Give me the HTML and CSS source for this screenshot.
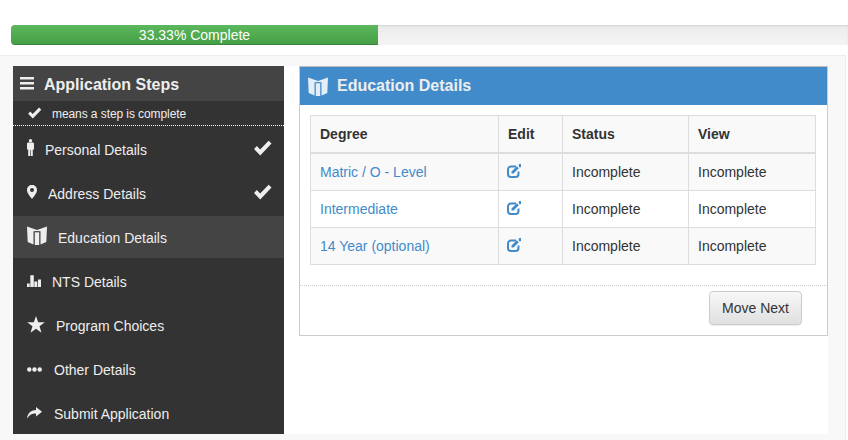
FILE: index.html
```html
<!DOCTYPE html>
<html lang="en">
<head>
<meta charset="utf-8">
<title>Education Details</title>
<link rel="stylesheet" href="styles.css">
</head>
<body>
<svg class="defs" width="0" height="0" aria-hidden="true">
  <defs>
    <symbol id="i-check" viewBox="0 0 20 17"><path d="M1 9.500 4 6.500 7.500 10 16.500 .8 19.600 3.800 7.600 16.400Z"/></symbol>
    <symbol id="i-book" viewBox="0 0 20 19"><path d="M0 .5 10 4 20 .5 19.300 16 13.500 18.600V5.200L10 5 6.500 5.200V18.600L.7 16Z"/><path d="M7.800 6.300H12.200V19H7.800Z"/></symbol>
    <symbol id="i-edit" viewBox="0 0 14 14"><path class="edit-box" d="M9 2.500H4A3 3 0 0 0 1 5.500V10A3 3 0 0 0 4 13H8.500A3 3 0 0 0 11.500 10V7.500"/><path d="M4.500 7.500 9.800 2.200 11.800 4.200 6.500 9.500H4.500ZM12 1.500A1.200 1.200 0 1 0 14 1.500 1.200 1.200 0 1 0 12 1.500Z"/></symbol>
  </defs>
</svg>

<div class="progress">
  <div class="progress-bar" style="width:367px">33.33% Complete</div>
</div>

<main class="shell">
  <div class="shell-row">
    <nav class="steps">
      <h2 class="steps-title">
        <svg class="bars" viewBox="0 0 14 13" width="14" height="13" aria-hidden="true"><path d="M0 0H14V2.600H0ZM0 5H14V7.600H0ZM0 10H14V12.600H0Z"/></svg>
        <span class="title-text">Application Steps</span>
      </h2>
      <p class="steps-note">
        <svg class="note-check" width="15" height="12" aria-hidden="true"><use href="#i-check"/></svg>
        <span class="note-text">means a step is complete</span>
      </p>
      <ul class="step-list">
        <li class="step">
          <svg class="ic ic-person" viewBox="0 0 7 17" width="7" height="17" aria-hidden="true"><circle cx="3.500" cy="1.700" r="1.700"/><path d="M1.300 3.600H5.700C6.500 3.600 7 4.200 7 5V10.500H5.800V17H3.800V11H3.200V17H1.200V10.500H0V5C0 4.200.5 3.600 1.300 3.600Z"/></svg>
          <span>Personal Details</span>
          <svg class="done" width="19" height="16" aria-hidden="true"><use href="#i-check"/></svg>
        </li>
        <li class="step">
          <svg class="ic ic-pin" viewBox="0 0 10 14" width="10" height="14" aria-hidden="true"><path fill-rule="evenodd" d="M5 0C7.800 0 10 2.100 10 4.900 10 8 6.800 11.500 5 14 3.200 11.500 0 8 0 4.900 0 2.100 2.200 0 5 0ZM5 2.900A2 2 0 1 0 5 6.900 2 2 0 1 0 5 2.900Z"/></svg>
          <span>Address Details</span>
          <svg class="done" width="19" height="16" aria-hidden="true"><use href="#i-check"/></svg>
        </li>
        <li class="step step-active">
          <svg class="ic ic-book" width="20" height="19" aria-hidden="true"><use href="#i-book"/></svg>
          <span>Education Details</span>
        </li>
        <li class="step">
          <svg class="ic ic-chart" viewBox="0 0 14 12" width="14" height="12" aria-hidden="true"><path d="M0 8.500H2.700V12H0ZM3.300 .2H6.800V12H3.300ZM7.300 6.500H10.300V12H7.300ZM11 4.500H14V12H11Z"/></svg>
          <span>NTS Details</span>
        </li>
        <li class="step">
          <svg class="ic ic-star" viewBox="0 0 18 17" width="18" height="17" aria-hidden="true"><path d="M9 0 11.200 6.300H17.800L12.500 10.300 14.500 16.800 9 12.800 3.500 16.800 5.500 10.300 .2 6.300H6.800Z"/></svg>
          <span>Program Choices</span>
        </li>
        <li class="step">
          <svg class="ic ic-dots" viewBox="0 0 15 5" width="15" height="5" aria-hidden="true"><circle cx="2.300" cy="2.500" r="2.200"/><circle cx="7.500" cy="2.500" r="2.200"/><circle cx="12.700" cy="2.500" r="2.200"/></svg>
          <span>Other Details</span>
        </li>
        <li class="step">
          <svg class="ic ic-share" viewBox="0 0 15 12" width="15" height="12" aria-hidden="true"><path d="M9 0 15 4.800 9 9.600V6.500C5.500 6.300 2.500 7.500 0 11.500 .5 6.500 3.500 3 9 2.900Z"/></svg>
          <span>Submit Application</span>
        </li>
      </ul>
    </nav>

    <section class="content">
      <article class="panel">
        <header class="panel-head">
          <svg class="head-book" width="20" height="19" aria-hidden="true"><use href="#i-book"/></svg>
          <h3 class="panel-title">Education Details</h3>
        </header>
        <div class="panel-body">
          <table class="grid">
            <colgroup>
              <col class="c-degree"><col class="c-edit"><col class="c-status"><col class="c-view">
            </colgroup>
            <thead>
              <tr><th>Degree</th><th>Edit</th><th>Status</th><th>View</th></tr>
            </thead>
            <tbody>
              <tr class="odd">
                <td><a class="link" href="#">Matric / O - Level</a></td>
                <td><svg class="edit" width="14" height="14" aria-hidden="true"><use href="#i-edit"/></svg></td>
                <td>Incomplete</td><td>Incomplete</td>
              </tr>
              <tr>
                <td><a class="link" href="#">Intermediate</a></td>
                <td><svg class="edit" width="14" height="14" aria-hidden="true"><use href="#i-edit"/></svg></td>
                <td>Incomplete</td><td>Incomplete</td>
              </tr>
              <tr class="odd">
                <td><a class="link" href="#">14 Year (optional)</a></td>
                <td><svg class="edit" width="14" height="14" aria-hidden="true"><use href="#i-edit"/></svg></td>
                <td>Incomplete</td><td>Incomplete</td>
              </tr>
            </tbody>
          </table>
        </div>
        <footer class="panel-foot">
          <button class="btn" type="button">Move Next</button>
        </footer>
      </article>
    </section>
  </div>
</main>
</body>
</html>
```
FILE: styles.css
```css
* { box-sizing: border-box; }
html, body { margin: 0; padding: 0; height: 100%; overflow: hidden; }
body {
  background: #fff;
  color: #333;
  font-family: "Liberation Sans", Arial, sans-serif;
  font-size: 14px;
  line-height: 20px;
  padding-top: 25px;
}
.defs { position: absolute; }

.progress {
  margin-left: 11px;
  height: 20px;
  background: linear-gradient(#ebebeb, #f5f5f5);
  box-shadow: inset 0 1px 2px rgba(0,0,0,.1);
  border-radius: 4px 0 0 4px;
  overflow: hidden;
}
.progress-bar {
  height: 20px;
  color: #fff;
  text-align: center;
  background: linear-gradient(#5cb85c, #449d44);
  box-shadow: inset 0 -1px 0 rgba(0,0,0,.15);
}

.shell {
  margin-top: 10px;
  width: 846px;
  background: #f8f8f8;
  border-top: 1px solid #eee;
  border-right: 1px solid #eee;
  padding: 10px 17px 6px 13px;
}
.shell-row { display: flex; height: 368px; background: #fff; }

.steps {
  width: 271px;
  flex: none;
  background: #333;
  color: #eee;
  overflow: hidden;
}
.steps-title {
  display: flex;
  align-items: center;
  gap: 10px;
  margin: 0;
  height: 35px;
  padding-left: 7px;
  background: #444;
  font-size: 16px;
  font-weight: bold;
}
.title-text { padding-top: 2px; }
.bars { fill: #eee; }
.steps-note {
  display: flex;
  align-items: center;
  gap: 10px;
  margin: 0;
  height: 25px;
  padding-left: 14px;
  font-size: 12px;
  border-bottom: 1px dotted #fff;
}
.note-text { padding-top: 2px; letter-spacing: -.08px; }
.note-check { fill: #eee; }

.step-list { list-style: none; margin: 2px 0 0; padding: 0; }
.step {
  display: flex;
  align-items: center;
  height: 44px;
  padding-left: 14px;
  position: relative;
}
.step-active { background: linear-gradient(#444, #444) top / 100% 42px no-repeat; }
.ic { flex: none; fill: #eee; }
.ic-person { margin: -5px 11px 0 0; }
.ic-pin { margin: -5px 11px 0 0; }
.ic-book { margin: -5px 11px 0 0; }
.ic-chart { margin: -2px 11px 0 0; }
.ic-star { margin: -3px 11px 0 0; }
.ic-dots { margin: -2px 12px 0 0; }
.ic-share { margin: -2px 12px 0 0; }
.done {
  position: absolute;
  left: 240px;
  top: 12px;
  fill: #eee;
}

.content { flex: 1; min-width: 0; padding-left: 15px; }
.panel {
  background: #fff;
  border: 1px solid #ccc;
  border-top-color: #bbb;
}
.panel-head {
  display: flex;
  align-items: center;
  gap: 9px;
  height: 38px;
  padding-left: 8px;
  background: #418bca;
  color: #eee;
}
.head-book { fill: #e4eef6; }
.panel-title { margin: 0; font-size: 16px; font-weight: bold; }
.panel-body { padding: 10px 11px 20px 10px; }

.grid {
  width: 505px;
  table-layout: fixed;
  border-collapse: collapse;
  border: 1px solid #ddd;
}
.c-degree { width: 188px; }
.c-edit { width: 64px; }
.c-status { width: 126px; }
.c-view { width: 127px; }
.grid th, .grid td {
  border: 1px solid #ddd;
  text-align: left;
  padding: 8px 9px;
  height: 37px;
}
.grid th {
  background: #f9f9f9;
  font-weight: bold;
  color: #333;
  height: 37px;
  border-bottom-width: 2px;
}
.odd td { background: #f9f9f9; }
.link { color: #428bca; text-decoration: none; }
.edit { display: block; fill: #428bca; margin: -2px 0 0 -1px; }
.edit-box { fill: none; stroke: #428bca; stroke-width: 2; }

.panel-foot {
  display: flex;
  justify-content: flex-end;
  padding: 5px 25px 10px 0;
  border-top: 1px dotted #ccc;
}
.btn {
  width: 93px;
  height: 34px;
  padding: 0;
  font: inherit;
  color: #333;
  background: linear-gradient(#f7f7f7, #e0e0e0);
  border: 1px solid #ccc;
  border-radius: 4px;
  box-shadow: 0 1px 1px rgba(0,0,0,.08);
}
```
